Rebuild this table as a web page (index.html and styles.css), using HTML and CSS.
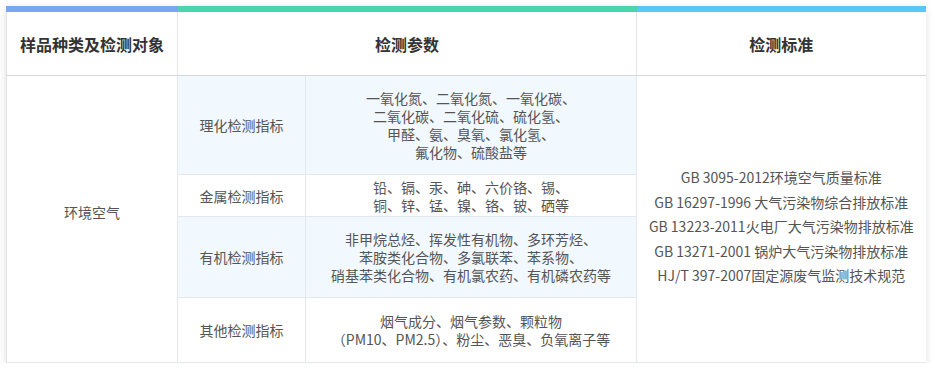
FILE: index.html
```html
<!DOCTYPE html>
<html lang="zh-CN">
<head>
<meta charset="utf-8">
<link rel="stylesheet" href="styles.css">
</head>
<body>
<div class="wrap">
<table class="grid">
  <colgroup>
    <col class="c1"><col class="c2"><col class="c3"><col class="c4">
  </colgroup>
  <thead>
    <tr>
      <th class="h h-blue">样品种类及检测对象</th>
      <th class="h h-green" colspan="2">检测参数</th>
      <th class="h h-sky">检测标准</th>
    </tr>
  </thead>
  <tbody>
    <tr class="r1 alt">
      <td class="obj" rowspan="4">环境空气</td>
      <td class="cat">理化检测指标</td>
      <td class="par">一氧化氮、二氧化氮、一氧化碳、<br>二氧化碳、二氧化硫、硫化氢、<br>甲醛、氨、臭氧、氯化氢、<br>氟化物、硫酸盐等</td>
      <td class="std" rowspan="4">GB 3095-2012环境空气质量标准<br>GB 16297-1996 大气污染物综合排放标准<br>GB 13223-2011火电厂大气污染物排放标准<br>GB 13271-2001 锅炉大气污染物排放标准<br>HJ/T 397-2007固定源废气监测技术规范</td>
    </tr>
    <tr class="r2">
      <td class="cat">金属检测指标</td>
      <td class="par">铅、镉、汞、砷、六价铬、锡、<br>铜、锌、锰、镍、铬、铍、硒等</td>
    </tr>
    <tr class="r3 alt">
      <td class="cat">有机检测指标</td>
      <td class="par">非甲烷总烃、挥发性有机物、多环芳烃、<br>苯胺类化合物、多氯联苯、苯系物、<br>硝基苯类化合物、有机氯农药、有机磷农药等</td>
    </tr>
    <tr class="r4">
      <td class="cat">其他检测指标</td>
      <td class="par">烟气成分、烟气参数、颗粒物<br>（PM10、PM2.5）、粉尘、恶臭、负氧离子等</td>
    </tr>
  </tbody>
</table>
</div>
</body>
</html>
```

FILE: styles.css
```css
html, body {
  margin: 0;
  padding: 0;
  background: #ffffff;
}
body {
  font-family: "Noto Sans CJK SC", "Noto Sans", sans-serif;
  color: #555555;
}
.wrap {
  padding: 6px 0 0 6px;
}
.grid {
  width: 919px;
  border-collapse: collapse;
  table-layout: fixed;
  background: #fff;
  box-shadow: 0 2px 8px rgba(0, 0, 0, 0.12);
  border-left: 1px solid #e2e2e2;
}
.c1 { width: 171px; }
.c2 { width: 128px; }
.c3 { width: 331px; }
.c4 { width: 289px; }

.h {
  height: 63px;
  padding: 0;
  font-size: 16px;
  font-weight: bold;
  color: #333333;
  text-align: center;
  vertical-align: middle;
  border-right: 1px solid #e6e6e6;
  border-bottom: 1px solid #d6d6d6;
  line-height: 20px;
}
.h:last-child { border-right: none; }
.h-blue { border-top: 6px solid #7aa8f0; }
.h-green { border-top: 6px solid #4cd4ae; }
.h-sky { border-top: 6px solid #5ac7f5; }

td {
  font-size: 14px;
  line-height: 18px;
  text-align: center;
  vertical-align: middle;
  padding: 0;
  border-right: 1px solid #e4e8ee;
  border-bottom: 1px solid #e4e8ee;
  color: #555555;
}
td.std { border-right: none; }
.alt .cat, .alt .par { background: #f1f8fe; }

.r1 { height: 99px; }
.r2 { height: 42px; }
.r3 { height: 81px; }
.r4 { height: 65px; }

.obj { padding-bottom: 14px; }
.std {
  line-height: 24.6px;
  padding-top: 15px;
  padding-left: 2px;
  padding-right: 2px;
  white-space: nowrap;
}
```
